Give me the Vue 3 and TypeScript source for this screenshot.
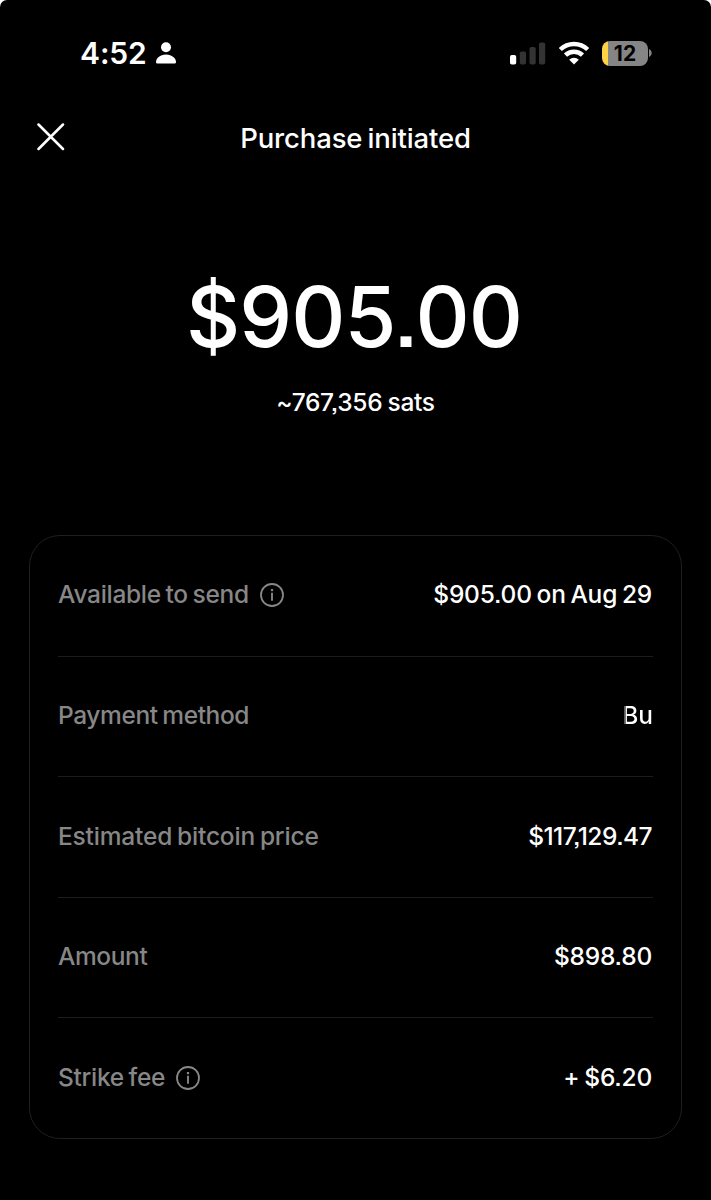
<script setup lang="ts">
interface Row {
  id: string
  label: string
  value: string
  info?: boolean
}

const rows: Row[] = [
  { id: 'available', label: 'Available to send', value: '$905.00 on Aug 29', info: true },
  { id: 'method', label: 'Payment method', value: 'Bu' },
  { id: 'price', label: 'Estimated bitcoin price', value: '$117,129.47' },
  { id: 'amount', label: 'Amount', value: '$898.80' },
  { id: 'fee', label: 'Strike fee', value: '+ $6.20', info: true },
]
</script>

<template>
  <main class="screen">
    <div class="status">
      <div class="status-left">
        <span class="time">4:52</span>
        <svg class="person" width="20" height="22" viewBox="0 0 20 22" fill="#fff">
          <circle cx="10" cy="5.2" r="5" />
          <path d="M1.9 21.6C.7 21.6 0 21 0 20c0-3.300 3.900-7.400 10-7.400S20 16.700 20 20c0 1-.7 1.600-1.900 1.600z" />
        </svg>
      </div>
      <div class="status-right">
        <svg width="36" height="24" viewBox="0 0 36 24">
          <rect x="0" y="14" width="6.200" height="9.500" rx="1.800" fill="#fff" />
          <rect x="9.800" y="10.500" width="6.200" height="13" rx="1.800" fill="#333" />
          <rect x="19.500" y="6" width="6.200" height="17.500" rx="1.800" fill="#333" />
          <rect x="29" y="1.500" width="6.200" height="22" rx="1.800" fill="#333" />
        </svg>
        <svg class="wifi" width="32" height="24" viewBox="0 0 32 24" fill="none" stroke="#fff" stroke-width="4.500">
          <path d="M2.300 8.500a19.700 19.700 0 0 1 27.400 0" />
          <path d="M7.500 14.100a12.200 12.200 0 0 1 17 0" />
          <path d="M16 23.600l-4.800-4.900a6.800 6.800 0 0 1 9.600 0z" fill="#fff" stroke="none" />
        </svg>
        <div class="battery"><span>12</span></div>
        <svg class="nub" width="3" height="8" viewBox="0 0 3 8"><path d="M0 0c3.600 1.500 3.600 6.500 0 8z" fill="#858585" /></svg>
      </div>
    </div>

    <header class="header">
      <svg class="close" width="28" height="28" viewBox="0 0 28 28" stroke="#fff" stroke-width="2.500" stroke-linecap="round">
        <path d="M1.500 1.500l24.500 24.500M26 1.500l-24.500 24.500" />
      </svg>
      <h1 class="title">Purchase initiated</h1>
    </header>

    <section class="hero">
      <div class="total">$905.00</div>
      <div class="sats">~767,356 sats</div>
    </section>

    <section class="card">
      <div v-for="row in rows" :key="row.id" class="row">
        <span class="label" :class="'label-' + row.id">{{ row.label }}</span>
        <svg v-if="row.info" class="info" width="24" height="24" viewBox="0 0 24 24" fill="none" stroke="#878787">
          <circle cx="12" cy="12" r="11" stroke-width="1.800" />
          <path d="M12 9.800v8" stroke-width="1.900" />
          <path d="M12 6v2.200" stroke-width="2.200" />
        </svg>
        <span class="value" :class="'value-' + row.id">{{ row.value }}</span>
      </div>
    </section>
  </main>
</template>

<style>
body {
  margin: 0;
  background: #fff;
}
</style>

<style scoped>
.screen {
  box-sizing: border-box;
  width: 711px;
  height: 1200px;
  background: #000;
  border-radius: 7px 7px 0 0;
  color: #fff;
  font-family: Inter, "Liberation Sans", sans-serif;
  font-weight: 500;
  overflow: hidden;
}
.status {
  display: flex;
  justify-content: space-between;
  height: 106px;
  padding: 0 59px 0 80px;
}
.status-left,
.status-right {
  display: flex;
  align-items: center;
}
.time {
  font-size: 30px;
  font-weight: 560;
  letter-spacing: -0.100px;
}
.person {
  margin-left: 9px;
}
.wifi {
  margin-left: 12px;
}
.battery {
  display: flex;
  align-items: center;
  justify-content: center;
  width: 46px;
  height: 25px;
  margin-left: 12px;
  border-radius: 8px;
  background: linear-gradient(90deg, #ffd145 6px, #858585 6px);
  color: #000;
  font-size: 21px;
  font-weight: 700;
}
.nub {
  margin-left: 1px;
}
.header {
  display: grid;
  grid-template-columns: 28px 1fr 28px;
  align-items: center;
  height: 62px;
  padding: 0 37px;
}
.title,
.total,
.sats,
.row {
  font-feature-settings: "ss07";
}
.title {
  margin: 0;
  padding-top: 2px;
  font-size: 27.500px;
  font-weight: 500;
  line-height: 60px;
  letter-spacing: -0.140px;
  word-spacing: -2px;
  text-align: center;
}
.hero {
  height: 367px;
  text-align: center;
}
.total {
  padding: 99px 3px 0 0;
  font-size: 84px;
  font-weight: 530;
  line-height: 100px;
  letter-spacing: -1px;
}
.sats {
  padding-top: 19px;
  font-size: 24.500px;
  line-height: 32px;
  letter-spacing: -0.300px;
  word-spacing: -1px;
}
.card {
  box-sizing: border-box;
  width: 653px;
  height: 604px;
  margin-left: 29px;
  padding: 0 28px;
  border: 1px solid #1f1f1f;
  border-radius: 31px;
}
.row {
  box-sizing: border-box;
  display: flex;
  align-items: center;
  height: 120.500px;
  font-size: 24.500px;
  word-spacing: -1.500px;
}
.row:first-child {
  margin-top: -1px;
}
.row + .row {
  border-top: 1px solid #1c1c1c;
}
.label,
.value {
  padding-bottom: 2px;
}
.label {
  color: #878787;
  letter-spacing: -0.300px;
}
.label-method {
  letter-spacing: -0.400px;
}
.label-price {
  letter-spacing: -0.180px;
}
.label-amount {
  letter-spacing: -0.400px;
}
.info {
  margin-left: 11px;
}
.value {
  margin-right: 1px;
  margin-left: auto;
  letter-spacing: -0.220px;
}
.value-price {
  letter-spacing: -0.550px;
}
.value-method {
  margin-right: 0;
  background: linear-gradient(90deg, #777 4px, #fff 4px);
  background-clip: text;
  color: transparent;
  letter-spacing: 0;
}
</style>
